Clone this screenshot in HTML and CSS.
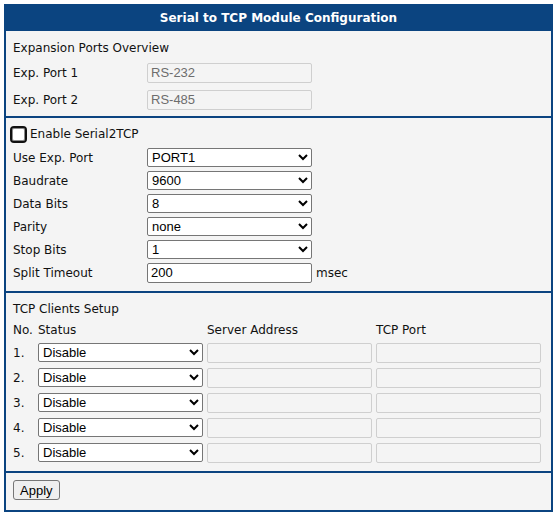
FILE: index.html
```html
<!DOCTYPE html>
<html>
<head>
<meta charset="utf-8">
<link rel="stylesheet" href="styles.css">
</head>
<body>
<div class="panel">
  <div class="title">Serial to TCP Module Configuration</div>

  <div class="section s1">
    <div class="heading">Expansion Ports Overview</div>
    <div class="grid g1">
      <span class="label">Exp. Port 1</span><input class="field disabled" value="RS-232" disabled><span></span>
      <span class="label">Exp. Port 2</span><input class="field disabled" value="RS-485" disabled><span></span>
    </div>
  </div>

  <div class="section s2">
    <label class="check"><input type="checkbox" class="cb"><span>Enable Serial2TCP</span></label>
    <div class="grid g2">
      <span class="label">Use Exp. Port</span><select class="sel"><option>PORT1</option></select><span></span>
      <span class="label">Baudrate</span><select class="sel"><option>9600</option></select><span></span>
      <span class="label">Data Bits</span><select class="sel"><option>8</option></select><span></span>
      <span class="label">Parity</span><select class="sel"><option>none</option></select><span></span>
      <span class="label">Stop Bits</span><select class="sel"><option>1</option></select><span></span>
      <span class="label">Split Timeout</span><input class="field text" value="200"><span class="unit">msec</span>
    </div>
  </div>

  <div class="section s3">
    <div class="heading">TCP Clients Setup</div>
    <div class="grid g3">
      <span class="label">No.</span><span class="label">Status</span><span class="label">Server Address</span><span class="label">TCP Port</span>
    </div>
    <div class="grid g3 rows">
      <span class="label">1.</span><select class="sel"><option>Disable</option></select><input class="field disabled" disabled><input class="field disabled" disabled>
      <span class="label">2.</span><select class="sel"><option>Disable</option></select><input class="field disabled" disabled><input class="field disabled" disabled>
      <span class="label">3.</span><select class="sel"><option>Disable</option></select><input class="field disabled" disabled><input class="field disabled" disabled>
      <span class="label">4.</span><select class="sel"><option>Disable</option></select><input class="field disabled" disabled><input class="field disabled" disabled>
      <span class="label">5.</span><select class="sel"><option>Disable</option></select><input class="field disabled" disabled><input class="field disabled" disabled>
    </div>
  </div>

  <div class="section s4">
    <button class="btn">Apply</button>
  </div>
</div>
</body>
</html>
```

FILE: styles.css
```css
html, body {
  margin: 0;
  padding: 0;
  background: #ffffff;
}
body {
  padding: 4px 0 0 4px;
  font-family: "DejaVu Sans", Verdana, sans-serif;
  font-size: 12px;
  color: #111;
}
.panel {
  width: 549px;
  box-sizing: border-box;
  border: 2px solid #0b4480;
  border-top: 0;
  background: #f4f4f4;
}
.title {
  height: 27px;
  margin: 0 -2px;
  background: #0b4480;
  color: #fff;
  font-weight: bold;
  font-size: 12px;
  display: flex;
  align-items: center;
  justify-content: center;
}
.section {
  padding-left: 7px;
  border-bottom: 2px solid #0b4480;
}
.section:last-child {
  border-bottom: 0;
}
.s1 { padding-top: 6px; padding-bottom: 3px; }
.s2 { padding-top: 5px; padding-bottom: 7px; }
.s3 { padding-top: 5px; padding-bottom: 6px; }
.s4 { padding-top: 7px; padding-bottom: 10px; }
.heading {
  height: 22px;
  display: flex;
  align-items: center;
}
.grid {
  display: grid;
  align-items: center;
}
.g1 {
  grid-template-columns: 134px 165px auto;
  grid-auto-rows: 27px;
}
.g2 {
  grid-template-columns: 134px 165px auto;
  grid-auto-rows: 23px;
  margin-top: 1px;
}
.g3 {
  grid-template-columns: 21px 165px 165px 165px;
  column-gap: 4px;
  grid-auto-rows: 20px;
}
.g3.rows {
  grid-auto-rows: 25px;
}
.field, .sel, .btn {
  font-family: "Liberation Sans", Arial, sans-serif;
  font-size: 13px;
  box-sizing: border-box;
  margin: 0;
}
.field {
  height: 20px;
  width: 165px;
  padding: 0 3px;
  border-radius: 2px;
}
.field.disabled {
  border: 1px solid #cfcfcf;
  background: #f4f4f4;
  color: #6d6d6d;
}
.field.text {
  border: 1px solid #767676;
  background: #fff;
  color: #000;
}
.sel {
  height: 19px;
  width: 165px;
  padding: 0;
  border: 1px solid #767676;
  border-radius: 2px;
  background: #fff;
  color: #000;
}
.unit {
  padding-left: 4px;
}
.check {
  height: 22px;
  display: flex;
  align-items: center;
}
.cb {
  appearance: none;
  -webkit-appearance: none;
  box-sizing: border-box;
  width: 17px;
  height: 17px;
  margin: 0 3px 0 -3px;
  border: 2px solid #101010;
  border-radius: 4px;
  background: #fff;
  box-shadow: inset 0 0 0 1px #8a8a8a;
}
.btn {
  height: 20px;
  padding: 0 6px;
  border: 1px solid #767676;
  border-radius: 3px;
  background: #efefef;
  color: #000;
}
```
